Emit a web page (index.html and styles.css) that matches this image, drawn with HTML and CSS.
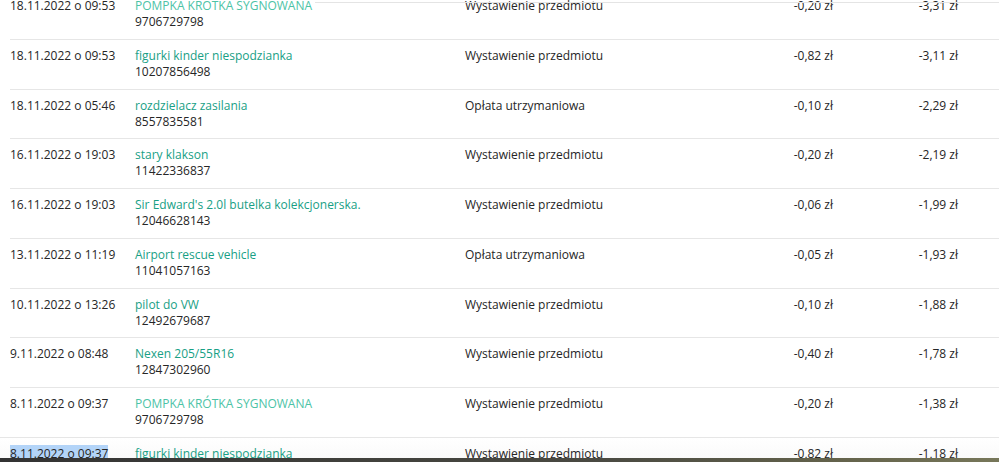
FILE: index.html
```html
<!DOCTYPE html>
<html lang="pl">
<head>
<meta charset="utf-8">
<link rel="stylesheet" href="styles.css">
</head>
<body>
<div class="page">
  <div class="topline"></div>
  <div class="table">
    <div class="row first">
      <div class="date">18.11.2022 o 09:53</div>
      <div class="item"><span class="link light">POMPKA KROTKA SYGNOWANA</span><span class="num">9706729798</span></div>
      <div class="type">Wystawienie przedmiotu</div>
      <div class="amt">-0,20 zł</div>
      <div class="bal">-3,31 zł</div>
    </div>
    <div class="row">
      <div class="date">18.11.2022 o 09:53</div>
      <div class="item"><span class="link">figurki kinder niespodzianka</span><span class="num">10207856498</span></div>
      <div class="type">Wystawienie przedmiotu</div>
      <div class="amt">-0,82 zł</div>
      <div class="bal">-3,11 zł</div>
    </div>
    <div class="row">
      <div class="date">18.11.2022 o 05:46</div>
      <div class="item"><span class="link">rozdzielacz zasilania</span><span class="num">8557835581</span></div>
      <div class="type">Opłata utrzymaniowa</div>
      <div class="amt">-0,10 zł</div>
      <div class="bal">-2,29 zł</div>
    </div>
    <div class="row">
      <div class="date">16.11.2022 o 19:03</div>
      <div class="item"><span class="link">stary klakson</span><span class="num">11422336837</span></div>
      <div class="type">Wystawienie przedmiotu</div>
      <div class="amt">-0,20 zł</div>
      <div class="bal">-2,19 zł</div>
    </div>
    <div class="row">
      <div class="date">16.11.2022 o 19:03</div>
      <div class="item"><span class="link">Sir Edward's 2.0l butelka kolekcjonerska.</span><span class="num">12046628143</span></div>
      <div class="type">Wystawienie przedmiotu</div>
      <div class="amt">-0,06 zł</div>
      <div class="bal">-1,99 zł</div>
    </div>
    <div class="row">
      <div class="date">13.11.2022 o 11:19</div>
      <div class="item"><span class="link">Airport rescue vehicle</span><span class="num">11041057163</span></div>
      <div class="type">Opłata utrzymaniowa</div>
      <div class="amt">-0,05 zł</div>
      <div class="bal">-1,93 zł</div>
    </div>
    <div class="row">
      <div class="date">10.11.2022 o 13:26</div>
      <div class="item"><span class="link">pilot do VW</span><span class="num">12492679687</span></div>
      <div class="type">Wystawienie przedmiotu</div>
      <div class="amt">-0,10 zł</div>
      <div class="bal">-1,88 zł</div>
    </div>
    <div class="row">
      <div class="date">9.11.2022 o 08:48</div>
      <div class="item"><span class="link">Nexen 205/55R16</span><span class="num">12847302960</span></div>
      <div class="type">Wystawienie przedmiotu</div>
      <div class="amt">-0,40 zł</div>
      <div class="bal">-1,78 zł</div>
    </div>
    <div class="row">
      <div class="date">8.11.2022 o 09:37</div>
      <div class="item"><span class="link light">POMPKA KRÓTKA SYGNOWANA</span><span class="num">9706729798</span></div>
      <div class="type">Wystawienie przedmiotu</div>
      <div class="amt">-0,20 zł</div>
      <div class="bal">-1,38 zł</div>
    </div>
    <div class="row last">
      <div class="date"><span class="sel">8.11.2022 o 09:37</span></div>
      <div class="item"><span class="link">figurki kinder niespodzianka</span><span class="num">10207856498</span></div>
      <div class="type">Wystawienie przedmiotu</div>
      <div class="amt">-0,82 zł</div>
      <div class="bal">-1,18 zł</div>
    </div>
  </div>
  <div class="dock"></div>
</div>
</body>
</html>
```
FILE: styles.css
```css
* { box-sizing: border-box; }
html, body {
  margin: 0;
  padding: 0;
  background: #fff;
  overflow: hidden;
}
body {
  font-family: "Open Sans", "Liberation Sans", sans-serif;
  font-size: 12px;
  color: #262626;
  width: 999px;
  height: 462px;
}
.page {
  position: relative;
  width: 999px;
  height: 462px;
  overflow: hidden;
}
.topline {
  position: absolute;
  left: 315px;
  right: 0;
  top: 2px;
  height: 1px;
  background: #e4e4e4;
  z-index: 2;
}
.table {
  margin-top: -11px;
  margin-left: 10px;
}
.row {
  display: grid;
  grid-template-columns: 125px 330px 260px 108px 125px 1fr;
  height: 49.75px;
  padding-top: 8px;
  line-height: 16px;
  border-top: 1.5px solid #e6e6e6;
}
.row.first { border-top-color: transparent; }
.date { white-space: nowrap; }
.item {
  display: flex;
  flex-direction: column;
}
.link { color: #18a085; white-space: nowrap; }
.link.light { color: #4cc3a6; }
.num { color: #262626; }
.amt, .bal { text-align: right; }
.row.last {
  background: linear-gradient(to bottom, #fff 0%, #fafafa 40%, #ececec 100%);
  margin-left: -10px;
  padding-left: 10px;
}
.sel { background: #b3d4f8; }
.dock {
  position: absolute;
  left: 0;
  right: 0;
  bottom: 0;
  height: 4px;
  background: linear-gradient(to right, #333, #4a4a42 60%, #65644c 85%, #77775a);
}
```
